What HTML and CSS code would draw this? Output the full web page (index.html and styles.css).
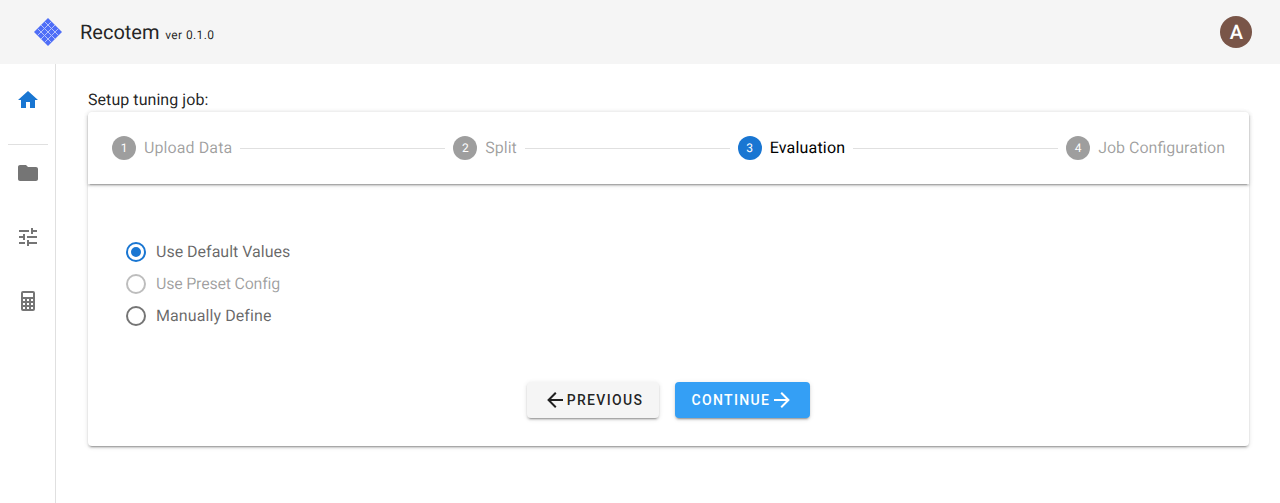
FILE: index.html
```html
<!DOCTYPE html>
<html lang="en">
<head>
	<meta charset="UTF-8">
	<title>Recotem</title>
	<link rel="stylesheet" href="styles.css">
</head>
<body>
	<header class="topbar">
		<svg class="logo" viewBox="0 0 28 28" width="28" height="28">
			<polygon points="14,0 28,14 14,28 0,14" fill="#4f6ef7"/>
			<path d="M3.5 10.5 L17.5 24.5 M7 7 L21 21 M10.5 3.5 L24.5 17.5 M17.5 3.5 L3.5 17.5 M21 7 L7 21 M24.5 10.5 L10.5 24.5" stroke="#b4c2fc" stroke-width="1" fill="none"/>
		</svg>
		<div class="brand">Recotem <span class="version">ver 0.1.0</span></div>
		<div class="avatar">A</div>
	</header>
	<div class="layout">
		<nav class="sidebar">
			<svg class="nav-icon home" viewBox="0 0 24 24"><path d="M10 20v-6h4v6h5v-8h3L12 3 2 12h3v8z"/></svg>
			<div class="nav-divider"></div>
			<div class="nav-group">
				<svg class="nav-icon" viewBox="0 0 24 24"><path d="M10 4H4c-1.1 0-1.99.9-1.99 2L2 18c0 1.1.9 2 2 2h16c1.1 0 2-.9 2-2V8c0-1.1-.9-2-2-2h-8l-2-2z"/></svg>
				<svg class="nav-icon" viewBox="0 0 24 24"><path d="M3 17v2h6v-2H3zM3 5v2h10V5H3zm10 16v-2h8v-2h-8v-2h-2v6h2zM7 9v2H3v2h4v2h2V9H7zm14 4v-2H11v2h10zm-6-4h2V7h4V5h-4V3h-2v6z"/></svg>
				<svg class="nav-icon" viewBox="0 0 24 24"><path d="M7,2H17A2,2 0 0,1 19,4V20A2,2 0 0,1 17,22H7A2,2 0 0,1 5,20V4A2,2 0 0,1 7,2M7,4V8H17V4H7M7,10V12H9V10H7M11,10V12H13V10H11M15,10V12H17V10H15M7,14V16H9V14H7M11,14V16H13V14H11M15,14V16H17V14H15M7,18V20H9V18H7M11,18V20H13V18H11M15,18V20H17V18H15Z"/></svg>
			</div>
		</nav>
		<main class="content">
			<div class="page-title">Setup tuning job:</div>
			<section class="card">
				<div class="stepper">
					<div class="step"><span class="step-num">1</span><span class="step-label upload">Upload Data</span></div>
					<div class="step-line"></div>
					<div class="step"><span class="step-num">2</span><span class="step-label">Split</span></div>
					<div class="step-line"></div>
					<div class="step active"><span class="step-num">3</span><span class="step-label evaluation">Evaluation</span></div>
					<div class="step-line"></div>
					<div class="step"><span class="step-num">4</span><span class="step-label">Job Configuration</span></div>
				</div>
				<div class="radios">
					<div class="radio checked">
						<svg viewBox="0 0 24 24"><path d="M12,20A8,8 0 0,1 4,12A8,8 0 0,1 12,4A8,8 0 0,1 20,12A8,8 0 0,1 12,20M12,2A10,10 0 0,0 2,12A10,10 0 0,0 12,22A10,10 0 0,0 22,12A10,10 0 0,0 12,2M12,7A5,5 0 0,0 7,12A5,5 0 0,0 12,17A5,5 0 0,0 17,12A5,5 0 0,0 12,7Z"/></svg>
						<span class="radio-label">Use Default Values</span>
					</div>
					<div class="radio disabled">
						<svg viewBox="0 0 24 24"><path d="M12,20A8,8 0 0,1 4,12A8,8 0 0,1 12,4A8,8 0 0,1 20,12A8,8 0 0,1 12,20M12,2A10,10 0 0,0 2,12A10,10 0 0,0 12,22A10,10 0 0,0 22,12A10,10 0 0,0 12,2Z"/></svg>
						<span class="radio-label preset">Use Preset Config</span>
					</div>
					<div class="radio">
						<svg viewBox="0 0 24 24"><path d="M12,20A8,8 0 0,1 4,12A8,8 0 0,1 12,4A8,8 0 0,1 20,12A8,8 0 0,1 12,20M12,2A10,10 0 0,0 2,12A10,10 0 0,0 12,22A10,10 0 0,0 22,12A10,10 0 0,0 12,2Z"/></svg>
						<span class="radio-label manual">Manually Define</span>
					</div>
				</div>
				<div class="actions">
					<button class="btn">
						<svg viewBox="0 0 24 24"><path d="M20,11V13H8L13.5,18.5L12.08,19.92L4.16,12L12.08,4.08L13.5,5.5L8,11H20Z"/></svg>Previous
					</button>
					<button class="btn primary">
						Continue<svg viewBox="0 0 24 24"><path d="M4,11V13H16L10.5,18.5L11.92,19.92L19.84,12L11.92,4.08L10.5,5.5L16,11H4Z"/></svg>
					</button>
				</div>
			</section>
		</main>
	</div>
</body>
</html>
```

FILE: styles.css
```css
*{
	margin:0;
	padding:0;
	box-sizing:border-box;
}
body{
	font-family:Roboto,"Liberation Sans",sans-serif;
	font-size:16px;
	color:rgba(0,0,0,.87);
	background:#fff;
	height:503px;
	overflow:hidden;
	text-rendering:geometricPrecision;
}
.topbar{
	height:64px;
	background:#f5f5f5;
	display:flex;
	align-items:center;
	padding:0 28px 0 34px;
}
.logo{
	flex:none;
	margin-right:18px;
}
.brand{
	font-size:20px;
	flex:1;
	padding-bottom:1px;
}
.version{
	font-size:12px;
	letter-spacing:.0333em;
	margin-left:.7px;
}
.avatar{
	width:32px;
	height:32px;
	border-radius:50%;
	background:#795548;
	color:#fff;
	font-size:20px;
	font-weight:500;
	line-height:32px;
	text-align:center;
	padding-left:1px;
}
.layout{
	display:flex;
	height:439px;
}
.sidebar{
	flex:none;
	width:56px;
	border-right:1px solid rgba(0,0,0,.12);
	padding:24px 0 0 16px;
}
.nav-icon{
	display:block;
	width:24px;
	height:24px;
	fill:#757575;
}
.nav-icon.home{
	fill:#1976d2;
}
.nav-divider{
	width:40px;
	height:1px;
	margin:32px 0 0 -8px;
	background:rgba(0,0,0,.12);
}
.nav-group{
	display:flex;
	flex-direction:column;
	gap:40px;
	padding-top:16px;
}
.content{
	flex:1;
	padding:23px 31px 0 32px;
}
.page-title{
	line-height:25px;
	letter-spacing:.06px;
}
.card{
	background:#fff;
	border-radius:4px;
	height:334px;
	box-shadow:0 3px 1px -2px rgba(0,0,0,.2),0 2px 2px 0 rgba(0,0,0,.14),0 1px 5px 0 rgba(0,0,0,.12);
}
.stepper{
	height:72px;
	display:flex;
	align-items:center;
	padding:0 24px;
	gap:8px;
	border-radius:4px 4px 0 0;
	box-shadow:0 3px 1px -2px rgba(0,0,0,.2),0 2px 2px 0 rgba(0,0,0,.14),0 1px 5px 0 rgba(0,0,0,.12);
}
.step{
	display:flex;
	align-items:center;
	color:rgba(0,0,0,.38);
}
.step.active{
	color:#000;
}
.step-label{
	padding-bottom:2px;
}
.step-label.upload{
	letter-spacing:.1px;
}
.step-label.evaluation{
	letter-spacing:.18px;
}
.step-num{
	width:24px;
	height:24px;
	margin-right:8px;
	border-radius:50%;
	background:rgba(0,0,0,.38);
	color:#fff;
	font-size:12px;
	line-height:24px;
	text-align:center;
}
.step.active .step-num{
	background:#1976d2;
}
.step-line{
	flex:1;
	height:1px;
	background:rgba(0,0,0,.12);
}
.radios{
	padding:52px 0 0 36px;
}
.radio{
	display:flex;
	align-items:center;
	gap:8px;
	height:32px;
	color:rgba(0,0,0,.6);
}
.radio-label{
	padding-bottom:2px;
}
.radio-label.preset{
	letter-spacing:-.22px;
}
.radio-label.manual{
	letter-spacing:.09px;
}
.radio svg{
	width:24px;
	height:24px;
	fill:rgba(0,0,0,.54);
}
.radio.checked svg{
	fill:#1976d2;
}
.radio.disabled{
	color:rgba(0,0,0,.38);
}
.radio.disabled svg{
	fill:rgba(0,0,0,.26);
}
.actions{
	display:flex;
	justify-content:center;
	gap:16px;
	margin-top:50px;
}
.btn{
	display:flex;
	align-items:center;
	height:36px;
	padding:0 16px;
	border:0;
	border-radius:4px;
	background:#f5f5f5;
	color:rgba(0,0,0,.87);
	font-family:inherit;
	font-size:14px;
	font-weight:500;
	letter-spacing:1.36px;
	text-transform:uppercase;
	box-shadow:0 3px 1px -2px rgba(0,0,0,.2),0 2px 2px 0 rgba(0,0,0,.14),0 1px 5px 0 rgba(0,0,0,.12);
}
.btn svg{
	width:24px;
	height:24px;
	fill:currentColor;
}
.btn.primary{
	background:#349ff5;
	color:#fff;
}
```
